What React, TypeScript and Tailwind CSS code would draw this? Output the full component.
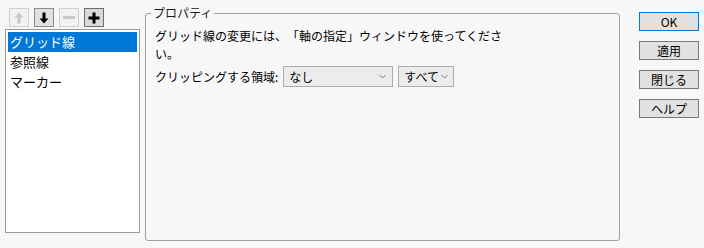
import React from "react";

const font = { fontFamily: '"Noto Sans CJK JP", "Noto Sans", sans-serif' };

function ToolBtn({ enabled, children }: { enabled: boolean; children: React.ReactNode }) {
  return (
    <div
      className={
        "flex h-[19px] w-[20px] items-center justify-center border " +
        (enabled ? "border-[#8a8a8a] bg-[#e1e1e1]" : "border-[#cfcfcf] bg-[#f2f2f2]")
      }
    >
      {children}
    </div>
  );
}

function DialogBtn({ label, active }: { label: string; active?: boolean }) {
  return (
    <div
      className={
        "flex h-[19px] w-[60px] items-center justify-center border bg-[#e1e1e1] text-[12px] leading-none text-black " +
        (active ? "border-[#0078d7]" : "border-[#7a7a7a]")
      }
    >
      {label}
    </div>
  );
}

function Chevron() {
  return (
    <svg width="7" height="5" viewBox="0 0 7 5" className="text-[#7a7a7a]">
      <path d="M0.5 1 L3.5 4 L6.5 1" fill="none" stroke="currentColor" strokeWidth="1" />
    </svg>
  );
}

export default function App() {
  return (
    <div
      className="flex h-[248px] w-[704px] bg-[#f7f7f7] text-[12px] text-black [text-spacing-trim:space-all]"
      style={font}
    >
      {/* left column */}
      <div className="ml-[5px] flex w-[135px] flex-col pt-[8px]">
        <div className="ml-[4px] flex gap-[5px]">
          <ToolBtn enabled={false}>
            <svg width="10" height="12" viewBox="0 0 10 12">
              <path d="M5 0.5 L9.5 5.5 L6.5 5.5 L6.5 11.5 L3.5 11.5 L3.5 5.5 L0.5 5.5 Z" fill="#c8c8c8" />
            </svg>
          </ToolBtn>
          <ToolBtn enabled>
            <svg width="10" height="12" viewBox="0 0 10 12">
              <path d="M5 11.5 L9.5 6.5 L6.5 6.5 L6.5 0.5 L3.5 0.5 L3.5 6.5 L0.5 6.5 Z" fill="#000" />
            </svg>
          </ToolBtn>
          <ToolBtn enabled={false}>
            <div className="h-[3px] w-[12px] bg-[#c8c8c8]" />
          </ToolBtn>
          <div className="flex h-[19px] w-[20px] items-center justify-center border border-[#6e6e6e] bg-[#dadada]">
            <svg width="12" height="12" viewBox="0 0 12 12">
              <path d="M4.5 0.5 H7.5 V4.5 H11.5 V7.5 H7.5 V11.5 H4.5 V7.5 H0.5 V4.5 H4.5 Z" fill="#000" />
            </svg>
          </div>
        </div>
        <div className="mt-[2px] h-[204px] border border-[#9a9a9a] bg-white p-[2px]">
          <div className="flex h-[20px] items-center bg-[#0078d7] pl-[2px] text-[13px] text-white">グリッド線</div>
          <div className="flex h-[20px] items-center pl-[2px] text-[13px]">参照線</div>
          <div className="flex h-[20px] items-center pl-[2px] text-[13px]">マーカー</div>
        </div>
      </div>

      {/* properties panel */}
      <div className="ml-[5px] mt-[6px] h-[235px] w-[475px]">
        <div className="relative mt-[7px] h-[228px] rounded-[3px] border border-[#a0a0a0] px-[9px] pt-[13px]">
          <div className="absolute left-[5px] top-[-8px] bg-[#f7f7f7] px-[2px] text-[12px] leading-[14px] text-[#1a1a1a]">
            プロパティ
          </div>
          <div className="w-[350px] text-[12px] leading-[18px]">
            グリッド線の変更には、「軸の指定」ウィンドウを使ってください。
          </div>
          <div className="mt-[3px] flex items-center">
            <span className="mr-[5px]">クリッピングする領域:</span>
            <div className="flex h-[21px] w-[110px] items-center justify-between border border-[#acacac] bg-[#ececec] pl-[5px] pr-[6px]">
              <span>なし</span>
              <Chevron />
            </div>
            <div className="ml-[5px] flex h-[21px] w-[56px] items-center justify-between border border-[#acacac] bg-[#ececec] pl-[5px] pr-[5px]">
              <span>すべて</span>
              <Chevron />
            </div>
          </div>
        </div>
      </div>

      {/* buttons */}
      <div className="ml-[19px] mt-[12px] flex flex-col gap-[10px]">
        <DialogBtn label="OK" active />
        <DialogBtn label="適用" />
        <DialogBtn label="閉じる" />
        <DialogBtn label="ヘルプ" />
      </div>
    </div>
  );
}
